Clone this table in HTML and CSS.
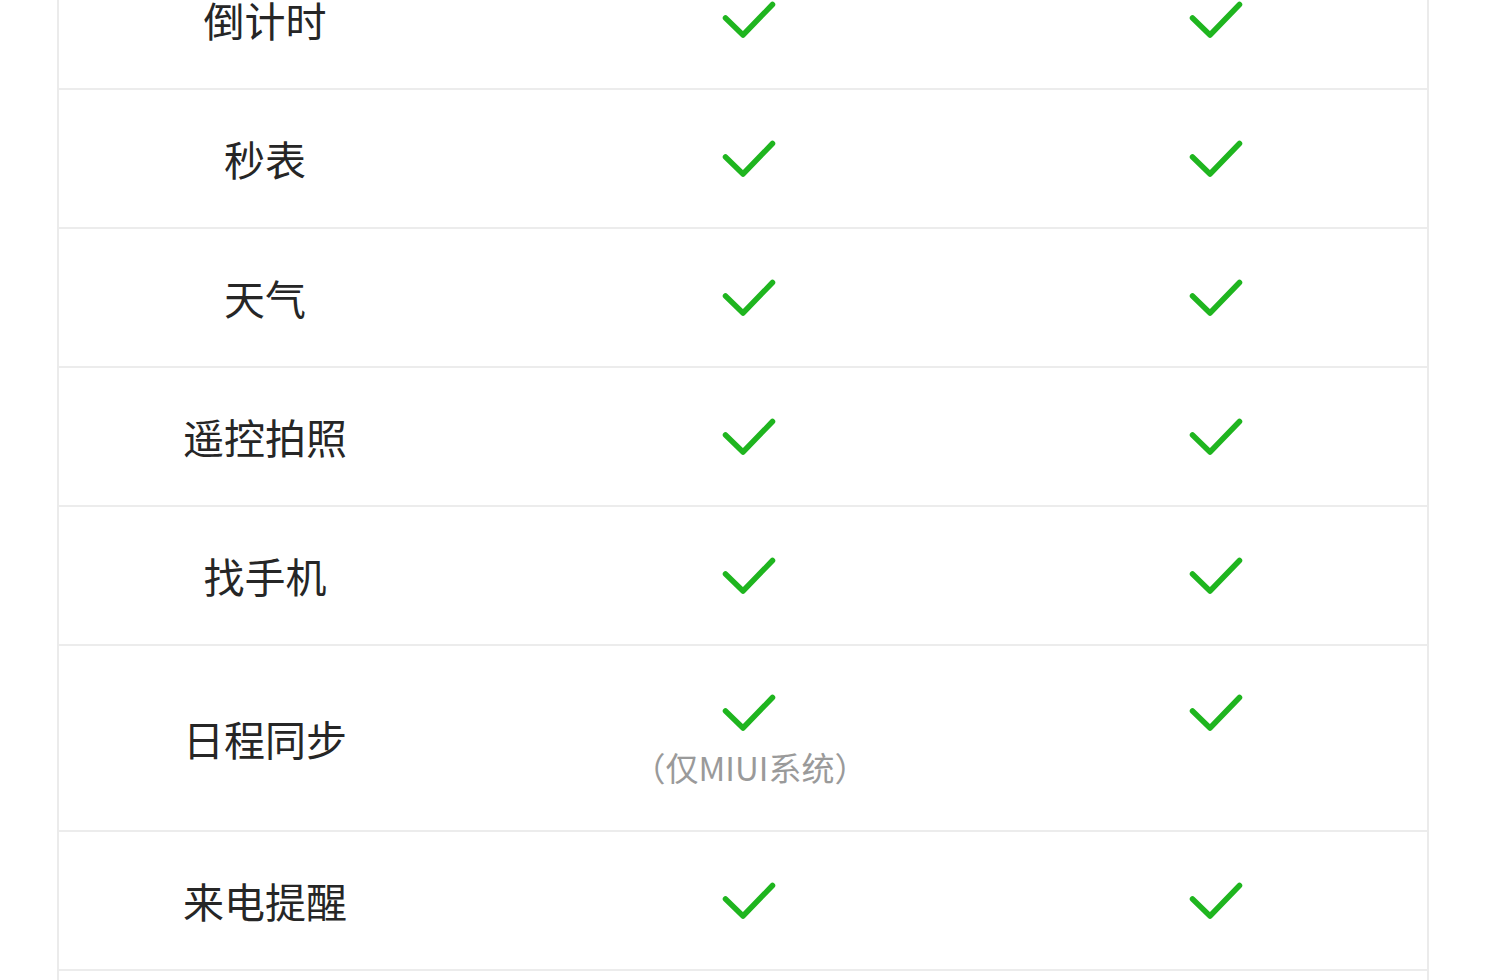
FILE: index.html
```html
<!DOCTYPE html>
<html lang="zh-CN">
<head>
<meta charset="utf-8">
<title>功能对比</title>
<link rel="stylesheet" href="styles.css">
</head>
<body>
<svg width="0" height="0" class="defs" aria-hidden="true">
  <symbol id="check" viewBox="0 0 56 40">
    <polyline points="4.5,18 22,35 51.5,4.5" fill="none" stroke="currentColor" stroke-width="5.5" stroke-linecap="round" stroke-linejoin="round"/>
  </symbol>
</svg>
<div class="table">
  <div class="row">
    <div class="cell name">倒计时</div>
    <div class="cell mid"><svg class="check"><use href="#check"/></svg></div>
    <div class="cell last"><svg class="check"><use href="#check"/></svg></div>
  </div>
  <div class="row">
    <div class="cell name">秒表</div>
    <div class="cell mid"><svg class="check"><use href="#check"/></svg></div>
    <div class="cell last"><svg class="check"><use href="#check"/></svg></div>
  </div>
  <div class="row">
    <div class="cell name">天气</div>
    <div class="cell mid"><svg class="check"><use href="#check"/></svg></div>
    <div class="cell last"><svg class="check"><use href="#check"/></svg></div>
  </div>
  <div class="row">
    <div class="cell name">遥控拍照</div>
    <div class="cell mid"><svg class="check"><use href="#check"/></svg></div>
    <div class="cell last"><svg class="check"><use href="#check"/></svg></div>
  </div>
  <div class="row">
    <div class="cell name">找手机</div>
    <div class="cell mid"><svg class="check"><use href="#check"/></svg></div>
    <div class="cell last"><svg class="check"><use href="#check"/></svg></div>
  </div>
  <div class="row tall">
    <div class="cell name">日程同步</div>
    <div class="cell mid stack">
      <svg class="check"><use href="#check"/></svg>
      <span class="note">（仅MIUI系统）</span>
    </div>
    <div class="cell last top"><svg class="check"><use href="#check"/></svg></div>
  </div>
  <div class="row">
    <div class="cell name">来电提醒</div>
    <div class="cell mid"><svg class="check"><use href="#check"/></svg></div>
    <div class="cell last"><svg class="check"><use href="#check"/></svg></div>
  </div>
  <div class="row">
    <div class="cell name">&nbsp;</div>
    <div class="cell mid"></div>
    <div class="cell last"></div>
  </div>
</div>
</body>
</html>
```

FILE: styles.css
```css
html, body {
  margin: 0;
  padding: 0;
  background: #ffffff;
  overflow: hidden;
}

body {
  font-family: "Noto Sans CJK SC", "Noto Sans", sans-serif;
  color: #262626;
}

.defs {
  position: absolute;
  width: 0;
  height: 0;
}

.table {
  margin: -49px 0 0 57px;
  width: 1368px;
  border-left: 2px solid #ebebeb;
  border-right: 2px solid #ebebeb;
}

.row {
  display: grid;
  grid-template-columns: 410px 560px 398px;
  height: 137px;
  border-bottom: 2px solid #ececec;
}

.row.tall {
  height: 184px;
}

.cell {
  display: flex;
  align-items: center;
  justify-content: center;
}

.name {
  font-size: 41px;
  line-height: 1;
  padding-left: 2px;
}

.last {
  padding-right: 24px;
}

.check {
  width: 56px;
  height: 40px;
  color: #1fb51f;
  display: block;
}

.stack {
  flex-direction: column;
  justify-content: flex-start;
  padding-top: 47px;
}

.note {
  font-size: 33px;
  line-height: 1;
  color: #9a9a9a;
  margin-top: 18px;
  margin-left: 2px;
}

.top {
  align-items: flex-start;
  padding-top: 47px;
}
```
